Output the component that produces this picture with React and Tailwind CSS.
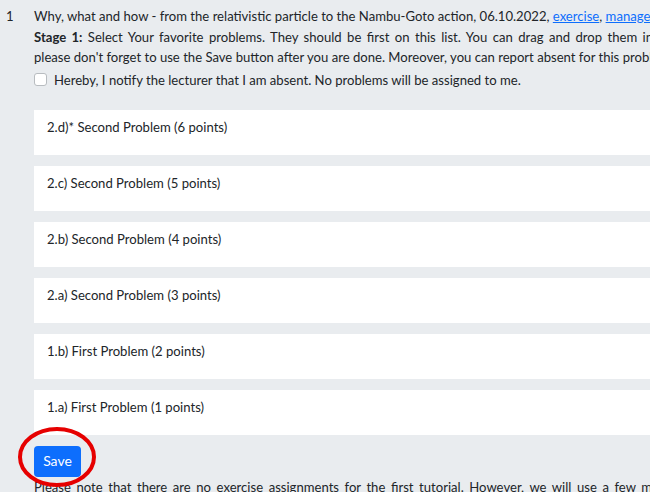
import React from "react";

const problems = [
  "2.d)* Second Problem (6 points)",
  "2.c) Second Problem (5 points)",
  "2.b) Second Problem (4 points)",
  "2.a) Second Problem (3 points)",
  "1.b) First Problem (2 points)",
  "1.a) First Problem (1 points)",
];

export default function App() {
  return (
    <div
      className="w-[650px] h-[492px] overflow-hidden bg-[#e9ecef] text-[#212529] text-[13.1px] leading-[20.5px]"
      style={{ fontFamily: 'Lato, "Noto Sans", sans-serif' }}
    >
      <div className="flex pt-[6px] w-[900px]">
        <div className="w-[34px] pl-[6px] shrink-0">1</div>
        <div className="w-[780px] shrink-0">
          <div className="whitespace-nowrap">
            Why, what and how - from the relativistic particle to the Nambu-Goto action, 06.10.2022,{" "}
            <a href="#" className="text-[#0d6efd] underline">exercise</a>,{" "}
            <a href="#" className="text-[#0d6efd] underline">manage</a>
          </div>
          <div className="text-justify [text-align-last:justify] whitespace-nowrap">
            <b>Stage 1:</b> Select Your favorite problems. They should be first on this list. You can drag and drop them into the order you like. Then
          </div>
          <div className="whitespace-nowrap">
            please don't forget to use the Save button after you are done. Moreover, you can report absent for this problem set.
          </div>
          <label className="flex items-center gap-[7px] mt-[2px]">
            <span className="w-[13px] h-[13px] rounded-[3px] border border-[#b8bcc0] bg-white shrink-0" />
            <span>Hereby, I notify the lecturer that I am absent. No problems will be assigned to me.</span>
          </label>
          <div className="mt-[20px] flex flex-col gap-[11px]">
            {problems.map((p) => (
              <div key={p} className="h-[45px] bg-white pl-[13px] pt-[7px]">
                {p}
              </div>
            ))}
          </div>
          <div className="relative mt-[11px]">
            <button className="h-[31px] w-[47px] rounded-[4px] bg-[#0d6efd] text-white text-[14px]">Save</button>
            <svg className="absolute left-[-17px] top-[-20px]" width="82" height="62" viewBox="0 0 82 62">
              <ellipse cx="40" cy="31" rx="37" ry="28" fill="none" stroke="#e60000" strokeWidth="4" />
            </svg>
          </div>
          <div className="w-[745px] text-justify [text-align-last:justify] whitespace-nowrap">
            Please note that there are no exercise assignments for the first tutorial. However, we will use a few minutes of the tutorial.
          </div>
        </div>
      </div>
    </div>
  );
}
